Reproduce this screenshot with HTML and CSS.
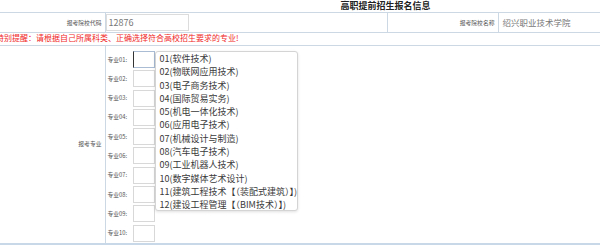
FILE: index.html
```html
<!DOCTYPE html>
<html lang="zh-CN">
<head>
    <meta charset="UTF-8">
    <meta name="viewport" content="width=device-width, initial-scale=1.0">
    <title>高职提前招生报名信息</title>
    <link rel="stylesheet" href="styles.css">
</head>
<body>
    <div class="page">
        <div class="sheet">
            <div class="title">高职提前招生报名信息</div>
            <table class="form-table">
                <colgroup>
                    <col class="col-label">
                    <col class="col-value">
                    <col class="col-label2">
                    <col>
                </colgroup>
                <tr class="row-school">
                    <td class="label">报考院校代码</td>
                    <td class="value"><input class="field" type="text" value="12876" readonly></td>
                    <td class="label">报考院校名称</td>
                    <td class="value"><span class="plain">绍兴职业技术学院</span></td>
                </tr>
                <tr class="row-notice">
                    <td colspan="4" class="notice">特别提醒：请根据自己所属科类、正确选择符合高校招生要求的专业!</td>
                </tr>
                <tr class="row-majors">
                    <td class="label">报考专业</td>
                    <td colspan="3" class="majors-cell">
                        <div class="majors">
                            <div class="major"><span>专业01:</span><input class="pick active" type="text"></div>
                            <div class="major"><span>专业02:</span><input class="pick" type="text"></div>
                            <div class="major"><span>专业03:</span><input class="pick" type="text"></div>
                            <div class="major"><span>专业04:</span><input class="pick" type="text"></div>
                            <div class="major"><span>专业05:</span><input class="pick" type="text"></div>
                            <div class="major"><span>专业06:</span><input class="pick" type="text"></div>
                            <div class="major"><span>专业07:</span><input class="pick" type="text"></div>
                            <div class="major"><span>专业08:</span><input class="pick" type="text"></div>
                            <div class="major"><span>专业09:</span><input class="pick" type="text"></div>
                            <div class="major"><span>专业10:</span><input class="pick" type="text"></div>

                            <ul class="dropdown">
                                <li>01(软件技术)</li>
                                <li>02(物联网应用技术)</li>
                                <li>03(电子商务技术)</li>
                                <li>04(国际贸易实务)</li>
                                <li>05(机电一体化技术)</li>
                                <li>06(应用电子技术)</li>
                                <li>07(机械设计与制造)</li>
                                <li>08(汽车电子技术)</li>
                                <li>09(工业机器人技术)</li>
                                <li>10(数字媒体艺术设计)</li>
                                <li>11(建筑工程技术【（装配式建筑）】)</li>
                                <li>12(建设工程管理【（BIM技术）】)</li>
                            </ul>
                        </div>
                    </td>
                </tr>
            </table>
        </div>
    </div>
</body>
</html>
```

FILE: styles.css
```css
:root {
    --line-color: #cdd8e5;
    --label-color: #555;
    --value-color: #777;
    --notice-color: #f02828;
}

* {
    box-sizing: border-box;
    margin: 0;
    padding: 0;
}

body {
    font-family: "Noto Sans CJK SC", "Noto Sans", sans-serif;
    background-color: #fff;
    color: #333;
    overflow: hidden;
}

.page {
    width: 600px;
    height: 245px;
    overflow: hidden;
}

.sheet {
    width: 779px;
    margin-left: -4px;
}

.title {
    height: 12px;
    line-height: 12px;
    text-align: center;
    font-size: 9px;
    font-weight: bold;
    color: #222;
}

.form-table {
    width: 779px;
    table-layout: fixed;
    border-collapse: collapse;
    border-bottom: 2px solid #c9d8e8;
    font-size: 9px;
    line-height: 1;
}

.col-label {
    width: 109px;
}

.col-value {
    width: 282px;
}

.col-label2 {
    width: 111px;
}

.form-table td {
    border-top: 1px solid var(--line-color);
    border-bottom: 1px solid var(--line-color);
    padding: 0;
    vertical-align: middle;
}

.form-table td + td {
    border-left: 1px solid var(--line-color);
}

.form-table td.label {
    text-align: right;
    font-size: 5.8px;
    color: var(--label-color);
    padding-right: 3px;
    white-space: nowrap;
}

.row-school td {
    height: 20px;
}

.field {
    width: 83px;
    height: 17px;
    border: 1px solid #dcdcdc;
    padding: 0 2px;
    font-family: inherit;
    font-size: 9px;
    color: var(--value-color);
    display: block;
}

.plain {
    font-size: 8.5px;
    color: var(--value-color);
    padding-left: 4px;
}

.row-notice td {
    height: 12px;
}

.form-table td.notice {
    font-size: 8px;
    line-height: 10px;
    padding-bottom: 2px;
    color: var(--notice-color);
    white-space: nowrap;
}

.form-table td.majors-cell {
    padding: 5px 0 1px 2px;
}

.majors {
    position: relative;
    display: flex;
    flex-direction: column;
    gap: 2.3px;
}

.major {
    display: flex;
    align-items: center;
    height: 17px;
}

.major span {
    width: 25px;
    font-size: 5.8px;
    color: var(--label-color);
}

.pick {
    width: 22px;
    height: 17px;
    border: 1px solid #d8d8d8;
    background: #fff;
}

.pick.active {
    border-color: #a9bcd4;
    border-left: 1px solid #333;
}

.dropdown {
    position: absolute;
    top: 0;
    left: 47px;
    width: 143px;
    height: 160px;
    list-style: none;
    background: #fff;
    border: 1px solid #d4d4d4;
    border-radius: 3px;
    box-shadow: 0 1px 3px rgba(0, 0, 0, 0.12);
    padding: 0 0 0 4px;
}

.dropdown li {
    height: 13.3px;
    line-height: 13.3px;
    font-size: 9px;
    color: #3a3a3a;
    white-space: nowrap;
}
```
